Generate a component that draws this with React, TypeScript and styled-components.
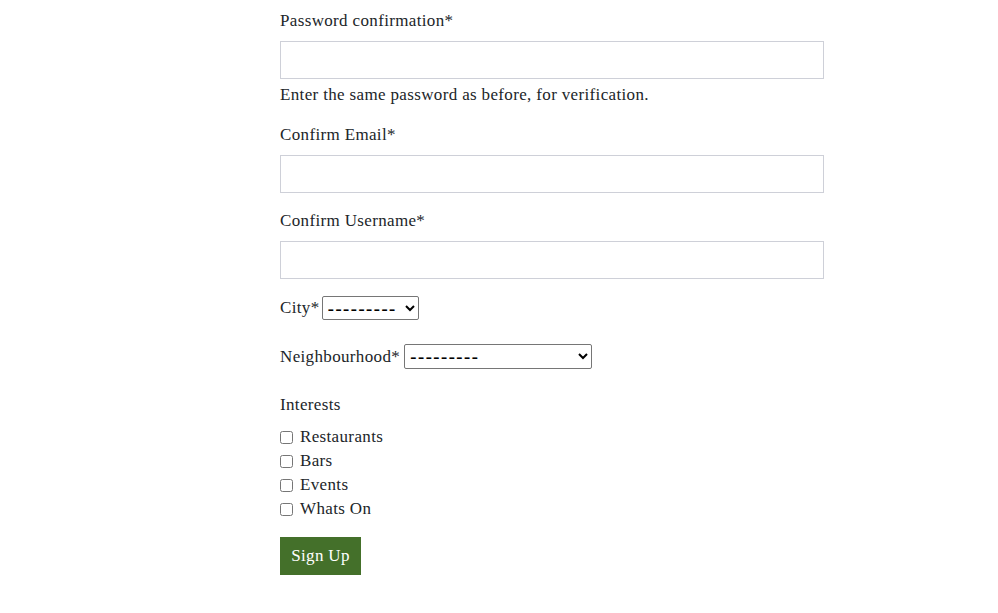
import React from "react";
import styled, { createGlobalStyle } from "styled-components";

const Global = createGlobalStyle`
  html, body { margin: 0; padding: 0; background: #fff; }
  body { font-family: "Liberation Serif", "DejaVu Serif", serif; color: #212529; letter-spacing: 0.35px; }
`;

const Form = styled.form`
  width: 544px;
  margin-left: 280px;
  padding-top: 9px;
  display: flex;
  flex-direction: column;
`;

const Field = styled.div`
  display: flex;
  flex-direction: column;
  margin-bottom: 16px;
`;

const Label = styled.label`
  font-size: 17px;
  line-height: 24px;
  margin-bottom: 8px;
`;

const TextInput = styled.input`
  box-sizing: border-box;
  width: 100%;
  height: 38px;
  border: 1px solid #ced0d8;
  border-radius: 0;
  padding: 6px 12px;
  font-size: 16px;
  outline: none;
`;

const Help = styled.div`
  font-size: 17px;
  line-height: 24px;
  margin-top: 4px;
`;

const InlineRow = styled.div<{ $mt: number }>`
  display: flex;
  align-items: center;
  margin-top: ${(p) => p.$mt}px;
  font-size: 17px;
  line-height: 24px;
`;

const Select = styled.select<{ $w: number }>`
  box-sizing: border-box;
  width: ${(p) => p.$w}px;
  height: ${(p) => (p.$w > 150 ? 25 : 24)}px;
  margin-left: ${(p) => (p.$w > 150 ? 4 : 2)}px;
  padding: 0 0 0 1px;
  font-family: "Liberation Sans", Arial, sans-serif;
  font-size: 20px;
  line-height: 20px;
  letter-spacing: 1px;
  border: 1px solid #767676;
  border-radius: 2px;
  background: #fff;
  color: #000;
`;

const Heading = styled.div`
  margin-top: 24px;
  font-size: 17px;
  line-height: 24px;
  margin-bottom: 8px;
`;

const CheckList = styled.div`
  display: flex;
  flex-direction: column;
`;

const CheckRow = styled.label`
  display: flex;
  align-items: center;
  height: 24px;
  font-size: 17px;
`;

const Box = styled.input`
  width: 13px;
  height: 13px;
  margin: 0 7px 0 0;
`;

const Button = styled.button`
  align-self: flex-start;
  margin-top: 16px;
  width: 81px;
  height: 38px;
  border: none;
  background: #44702a;
  color: #fff;
  font-family: "Liberation Serif", "DejaVu Serif", serif;
  font-size: 17px;
  letter-spacing: 0.35px;
  padding: 0;
`;

export default function App() {
  return (
    <>
      <Global />
      <Form>
        <Field>
          <Label>Password confirmation*</Label>
          <TextInput type="password" />
          <Help>Enter the same password as before, for verification.</Help>
        </Field>
        <Field>
          <Label>Confirm Email*</Label>
          <TextInput type="email" />
        </Field>
        <Field>
          <Label>Confirm Username*</Label>
          <TextInput type="text" />
        </Field>
        <InlineRow $mt={1}>
          City*
          <Select $w={97}>
            <option>---------</option>
          </Select>
        </InlineRow>
        <InlineRow $mt={24}>
          Neighbourhood*
          <Select $w={188}>
            <option>---------</option>
          </Select>
        </InlineRow>
        <Heading>Interests</Heading>
        <CheckList>
          {["Restaurants", "Bars", "Events", "Whats On"].map((t) => (
            <CheckRow key={t}>
              <Box type="checkbox" />
              {t}
            </CheckRow>
          ))}
        </CheckList>
        <Button type="button">Sign Up</Button>
      </Form>
    </>
  );
}
